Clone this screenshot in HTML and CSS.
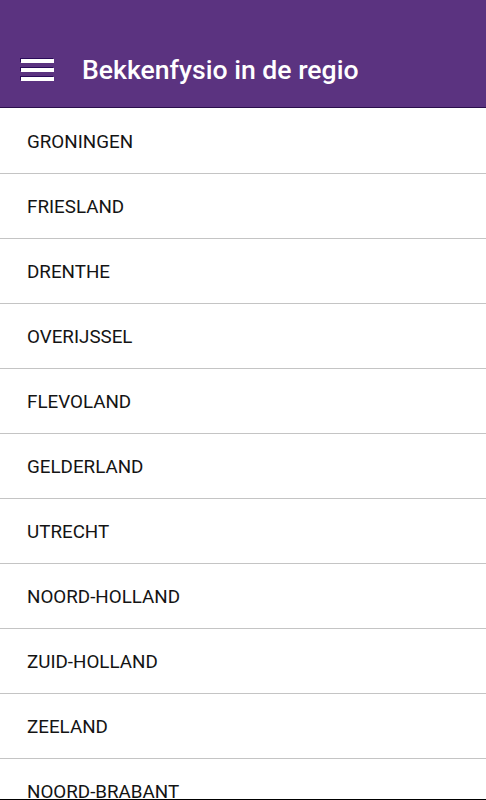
FILE: index.html
```html
<!DOCTYPE html>
<html lang="nl">
<head>
<meta charset="utf-8">
<title>Bekkenfysio in de regio</title>
<link rel="stylesheet" href="styles.css">
</head>
<body>
<div class="screen">
  <header class="appbar">
    <button class="menu" aria-label="Menu">
      <span class="bar"></span>
      <span class="bar"></span>
      <span class="bar"></span>
    </button>
    <h1 class="title">Bekkenfysio in de regio</h1>
  </header>
  <ul class="list">
    <li class="item">GRONINGEN</li>
    <li class="item">FRIESLAND</li>
    <li class="item">DRENTHE</li>
    <li class="item">OVERIJSSEL</li>
    <li class="item">FLEVOLAND</li>
    <li class="item">GELDERLAND</li>
    <li class="item">UTRECHT</li>
    <li class="item">NOORD-HOLLAND</li>
    <li class="item">ZUID-HOLLAND</li>
    <li class="item">ZEELAND</li>
    <li class="item">NOORD-BRABANT</li>
  </ul>
  <div class="navedge"></div>
</div>
</body>
</html>
```
FILE: styles.css
```css
html, body {
  margin: 0;
  padding: 0;
  background: #ffffff;
}
.screen {
  width: 486px;
  height: 800px;
  display: flex;
  flex-direction: column;
  overflow: hidden;
  font-family: Roboto, "Liberation Sans", sans-serif;
}
.appbar {
  flex: none;
  height: 107px;
  background: #5b3380;
  border-bottom: 1px solid #2b0f4c;
  display: flex;
  align-items: flex-end;
  padding: 0 0 0 21px;
  box-sizing: content-box;
}
.menu {
  flex: none;
  width: 34px;
  height: 75px;
  padding: 0;
  margin: 0;
  border: 0;
  background: transparent;
  display: flex;
  flex-direction: column;
  justify-content: center;
  gap: 5px;
}
.bar {
  display: block;
  width: 33px;
  height: 4px;
  background: #ffffff;
  box-shadow: -1px -1px 0 #2b0a5a;
}
.title {
  margin: 0 0 0 27px;
  height: 75px;
  display: flex;
  align-items: center;
  color: #ffffff;
  font-size: 26.6px;
  font-weight: 500;
  letter-spacing: 0;
}
.list {
  flex: 1;
  min-height: 0;
  list-style: none;
  margin: 0;
  padding: 1px 0 0;
  overflow: hidden;
}
.item {
  height: 62px;
  padding-top: 2px;
  border-bottom: 1px solid #c4c4c4;
  display: flex;
  align-items: center;
  padding-left: 27px;
  font-size: 18.8px;
  color: #141414;
}
.navedge {
  flex: none;
  height: 1px;
  background: #000000;
}
```
